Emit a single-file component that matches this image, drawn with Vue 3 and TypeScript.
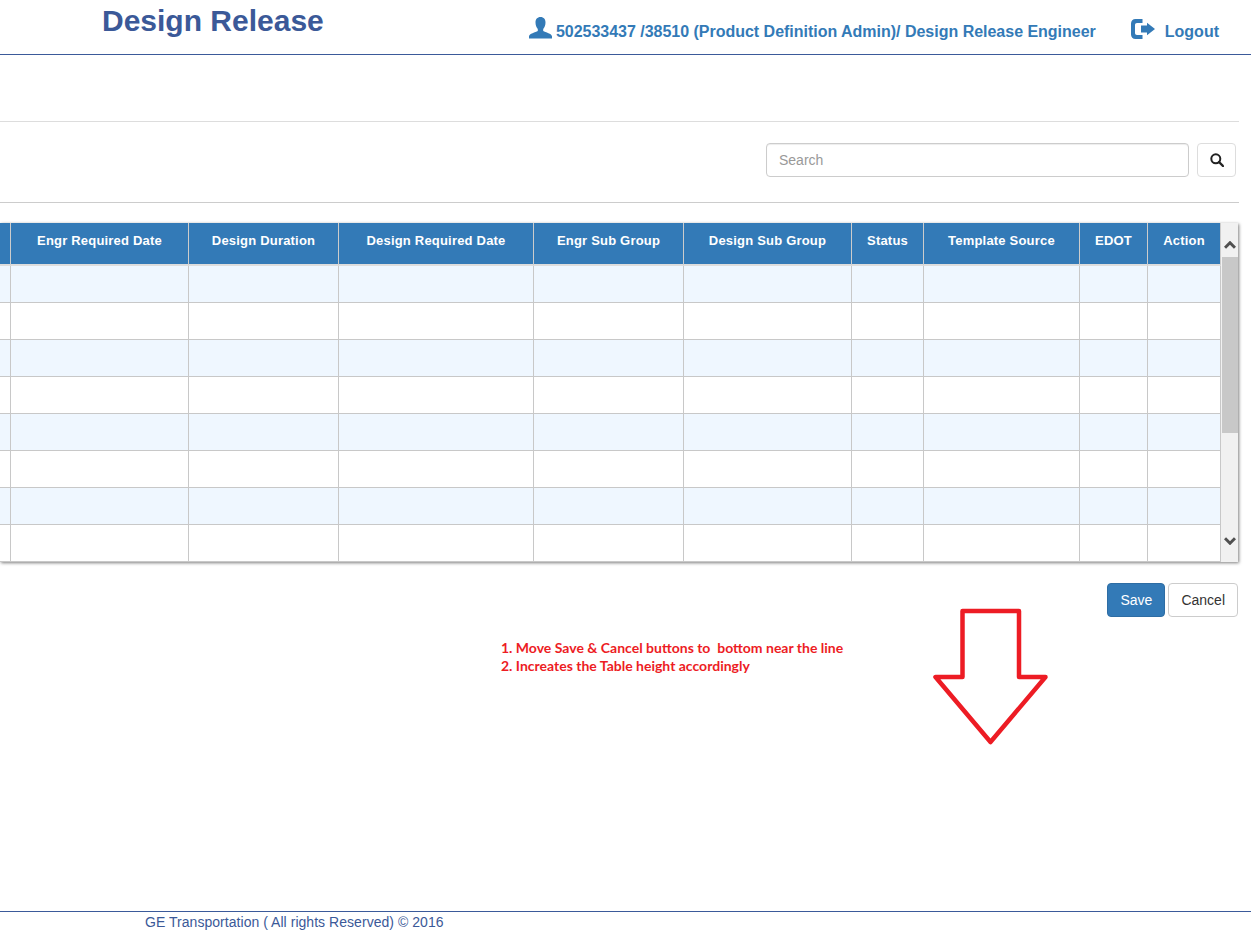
<script setup lang="ts">
interface Column {
  title: string
  width: number
}

const columns: Column[] = [
  { title: '', width: 11 },
  { title: 'Engr Required Date', width: 178 },
  { title: 'Design Duration', width: 150 },
  { title: 'Design Required Date', width: 195 },
  { title: 'Engr Sub Group', width: 150 },
  { title: 'Design Sub Group', width: 168 },
  { title: 'Status', width: 72 },
  { title: 'Template Source', width: 156 },
  { title: 'EDOT', width: 68 },
  { title: 'Action', width: 73 }
]

const rows = [1, 2, 3, 4, 5, 6, 7, 8]
</script>

<template>
  <div class="page">
    <header class="top-bar">
      <h1 class="app-title">Design Release</h1>
      <div class="user-info">
        <svg class="user-icon" viewBox="0 0 23 21.500" width="23" height="21.500">
          <path d="M11.500 0c3.300 0 5 2.400 5 5.400 0 2.600-1 5.100-2.300 6.600v1.900c2.200 1.200 8.800 2.700 8.800 5.400v2.200H0v-2.200c0-2.700 6.600-4.200 8.800-5.400V12C7.500 10.500 6.500 8 6.500 5.400 6.500 2.400 8.200 0 11.500 0z" fill="#337ab7" />
        </svg>
        <span class="user-text">502533437 /38510 (Product Definition Admin)/ Design Release Engineer</span>
      </div>
      <div class="logout">
        <svg class="logout-icon" viewBox="0 0 24 20" width="24" height="20">
          <path d="M4.500 0H11.500V4H6C4.800 4 4 4.800 4 6V14C4 15.200 4.800 16 6 16H11.500V20H4.500C1.800 20 0 18.200 0 15.500V4.500C0 1.800 1.800 0 4.500 0Z" fill="#337ab7" />
          <path d="M16 3.800 24 10 16 16.200V13.500H10V6.500H16Z" fill="#337ab7" />
        </svg>
        <span>Logout</span>
      </div>
    </header>

    <main class="content">
      <div class="toolbar">
        <input class="search-input" type="text" placeholder="Search" />
        <button class="search-btn" type="button" aria-label="Search">
          <svg viewBox="0 0 14 14" width="14" height="14">
            <circle cx="5.800" cy="5.800" r="4.500" fill="none" stroke="#222" stroke-width="2" />
            <path d="M9 9l4 4" stroke="#222" stroke-width="2.400" stroke-linecap="round" />
          </svg>
        </button>
      </div>

      <div class="grid-wrap">
        <table class="grid">
          <colgroup>
            <col v-for="col in columns" :key="col.title" :style="{ width: col.width + 'px' }" />
          </colgroup>
          <thead>
            <tr>
              <th v-for="col in columns" :key="col.title">{{ col.title }}</th>
            </tr>
          </thead>
          <tbody>
            <tr v-for="row in rows" :key="row">
              <td v-for="col in columns" :key="col.title"></td>
            </tr>
          </tbody>
        </table>
        <div class="scrollbar">
          <div class="scroll-arrow">
            <svg viewBox="0 0 12 8" width="12" height="8">
              <path d="M1 6.800 6 1.800l5 5" fill="none" stroke="#505050" stroke-width="3" />
            </svg>
          </div>
          <div class="scroll-thumb"></div>
          <div class="scroll-track"></div>
          <div class="scroll-arrow bottom">
            <svg viewBox="0 0 12 8" width="12" height="8">
              <path d="M1 1.200 6 6.200l5-5" fill="none" stroke="#505050" stroke-width="3" />
            </svg>
          </div>
        </div>
      </div>

      <div class="actions">
        <button class="btn btn-primary" type="button">Save</button>
        <button class="btn btn-default" type="button">Cancel</button>
      </div>
    </main>

    <footer class="page-footer">GE Transportation ( All rights Reserved) © 2016</footer>

    <div class="note">
      <div>1. Move Save &amp; Cancel buttons to&nbsp; bottom near the line</div>
      <div>2. Increates the Table height accordingly</div>
    </div>
    <svg class="note-arrow" viewBox="0 0 120 140" width="120" height="140">
      <path d="M30.500 3H87V69H113.500L58.500 134 3.500 69H30.500Z" fill="none" stroke="#ed1c24" stroke-width="4.500" stroke-linejoin="round" />
    </svg>
  </div>
</template>

<style>
body {
  background: #fff;
}
</style>

<style scoped>
.page {
  position: relative;
  display: flex;
  flex-direction: column;
  height: 939px;
  overflow: hidden;
  font-family: "Liberation Sans", Arial, sans-serif;
  background: #fff;
}

.top-bar {
  display: flex;
  align-items: flex-start;
  height: 54px;
  padding: 0 32px 0 102px;
  border-bottom: 1px solid #3b5a9a;
  flex-shrink: 0;
}

.app-title {
  margin: 4px 0 0;
  font-size: 30px;
  line-height: 34px;
  font-weight: 700;
  color: #3b5998;
}

.user-info {
  display: flex;
  align-items: center;
  margin-left: auto;
  margin-top: 16px;
  height: 32px;
  color: #337ab7;
  font-size: 16px;
  font-weight: 700;
}

.user-icon {
  margin-right: 4px;
  margin-top: -8px;
}

.user-text {
  white-space: nowrap;
  letter-spacing: -0.015px;
}

.logout {
  display: flex;
  align-items: center;
  gap: 10px;
  margin-left: 35px;
  margin-top: 16px;
  height: 32px;
  color: #337ab7;
  font-size: 16px;
  font-weight: 700;
}

.logout-icon {
  margin-top: -7px;
}

.content {
  width: 1239px;
  margin-top: 66px;
  flex-shrink: 0;
}

.toolbar {
  display: flex;
  justify-content: flex-end;
  gap: 8px;
  height: 59px;
  padding: 21px 3px 0 0;
  border-top: 1px solid #ddd;
  border-bottom: 1px solid #ccc;
}

.search-input {
  box-sizing: border-box;
  width: 423px;
  height: 34px;
  padding: 6px 12px;
  border: 1px solid #ccc;
  border-radius: 4px;
  font-family: inherit;
  font-size: 14px;
  color: #555;
  outline: none;
  box-shadow: inset 0 1px 1px rgba(0, 0, 0, 0.075);
}

.search-input::placeholder {
  color: #999;
}

.search-btn {
  display: flex;
  align-items: center;
  justify-content: center;
  width: 39px;
  height: 34px;
  padding: 0;
  background: #fff;
  border: 1px solid #ddd;
  border-radius: 4px;
}

.grid-wrap {
  display: flex;
  width: 1238px;
  margin-top: 20px;
  box-shadow: 1px 1px 3px rgba(0, 0, 0, 0.5);
}

.grid {
  width: 1221px;
  table-layout: fixed;
  border-collapse: separate;
  border-spacing: 0;
}

.grid th {
  box-sizing: border-box;
  height: 43px;
  padding: 9px 0 0;
  background: #337ab7;
  color: #fff;
  font-size: 13px;
  line-height: 18px;
  font-weight: 700;
  letter-spacing: 0.2px;
  text-align: center;
  vertical-align: top;
  white-space: nowrap;
  border-right: 1px solid #ccc;
  border-bottom: 2px solid #ddd;
}

.grid td {
  box-sizing: border-box;
  height: 37px;
  padding: 0;
  border-right: 1px solid #c8c8c8;
  border-bottom: 1px solid #c8c8c8;
}

.grid tbody tr:nth-child(odd) td {
  background: #eff7ff;
}

.scrollbar {
  display: flex;
  flex-direction: column;
  width: 17px;
  background: #f1f1f1;
}

.scroll-arrow {
  display: flex;
  align-items: flex-end;
  justify-content: center;
  height: 34px;
  padding-bottom: 8px;
  box-sizing: border-box;
}

.scroll-arrow.bottom {
  align-items: center;
  height: 28px;
  padding-bottom: 14px;
}

.scroll-thumb {
  height: 176px;
  margin: 0 0 0 1px;
  background: #c8c8c8;
}

.scroll-track {
  flex: 1;
}

.actions {
  display: flex;
  justify-content: flex-end;
  gap: 3px;
  margin-top: 21px;
  padding-right: 1px;
}

.btn {
  box-sizing: border-box;
  height: 34px;
  padding: 6px 12px;
  border-radius: 4px;
  font-family: inherit;
  font-size: 14px;
  line-height: 20px;
}

.btn-primary {
  color: #fff;
  background: #337ab7;
  border: 1px solid #2e6da4;
}

.btn-default {
  color: #333;
  background: #fff;
  border: 1px solid #ccc;
}

.page-footer {
  box-sizing: border-box;
  height: 28px;
  margin-top: auto;
  padding: 0 0 0 145px;
  border-top: 1px solid #3b5a9a;
  color: #3b5998;
  font-size: 14px;
  line-height: 20px;
  letter-spacing: 0.04px;
}

.note {
  position: absolute;
  left: 501px;
  top: 639px;
  font-family: Lato, "Liberation Sans", sans-serif;
  font-size: 14px;
  font-weight: 700;
  line-height: 18px;
  color: #ed1c24;
  white-space: nowrap;
}

.note-arrow {
  position: absolute;
  left: 932px;
  top: 608px;
}
</style>
